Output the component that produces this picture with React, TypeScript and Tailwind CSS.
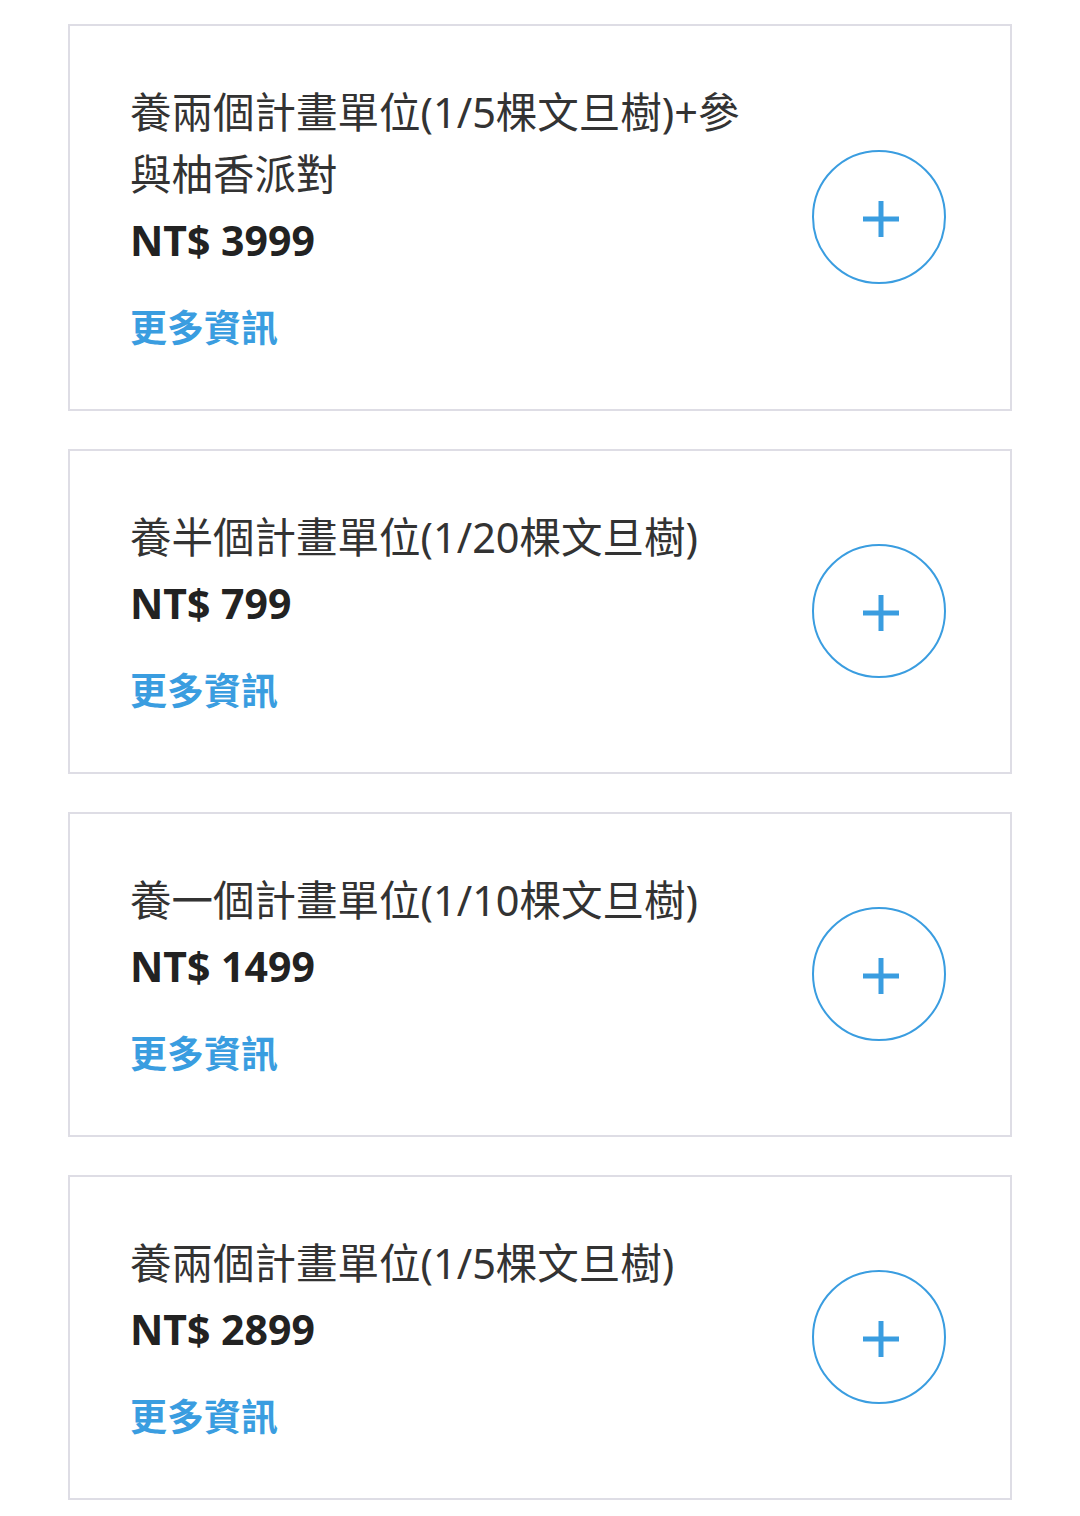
type Plan = {
  title: string;
  price: string;
};

const plans: Plan[] = [
  { title: "養兩個計畫單位(1/5棵文旦樹)+參與柚香派對", price: "NT$ 3999" },
  { title: "養半個計畫單位(1/20棵文旦樹)", price: "NT$ 799" },
  { title: "養一個計畫單位(1/10棵文旦樹)", price: "NT$ 1499" },
  { title: "養兩個計畫單位(1/5棵文旦樹)", price: "NT$ 2899" },
];

const PlusButton = () => (
  <button
    type="button"
    className="flex h-[134px] w-[134px] shrink-0 items-center justify-center rounded-full border-[2.5px] border-[#3a9de0] bg-white"
  >
    <svg width="38" height="38" viewBox="0 0 38 38" className="ml-[4px] mt-[4px]">
      <line x1="19" y1="1" x2="19" y2="37" stroke="#3a9de0" strokeWidth="5" />
      <line x1="1" y1="19" x2="37" y2="19" stroke="#3a9de0" strokeWidth="5" />
    </svg>
  </button>
);

const PlanCard = ({ title, price }: Plan) => (
  <div className="flex items-center justify-between border-2 border-[#dedde5] bg-white pl-[60px] pr-[64px] pt-[55px] pb-[56px]">
    <div className="w-[640px]">
      <p className="text-[41.5px] leading-[62px] text-[#333333]">{title}</p>
      <p className="mt-[5px] text-[41px] font-bold leading-[60px] text-[#222222]">
        {price}
      </p>
      <a className="mt-[33px] block text-[37px] font-bold leading-[50px] text-[#3a9de0]">
        更多資訊
      </a>
    </div>
    <PlusButton />
  </div>
);

const App = () => {
  return (
    <div
      className="min-h-[1516px] w-[1080px] bg-white px-[68px] pt-[24px]"
      style={{ fontFamily: '"Noto Sans", "Noto Sans CJK TC", sans-serif' }}
    >
      <div className="flex flex-col gap-[38px]">
        {plans.map((plan) => (
          <PlanCard key={plan.price} {...plan} />
        ))}
      </div>
    </div>
  );
};

export default App;
